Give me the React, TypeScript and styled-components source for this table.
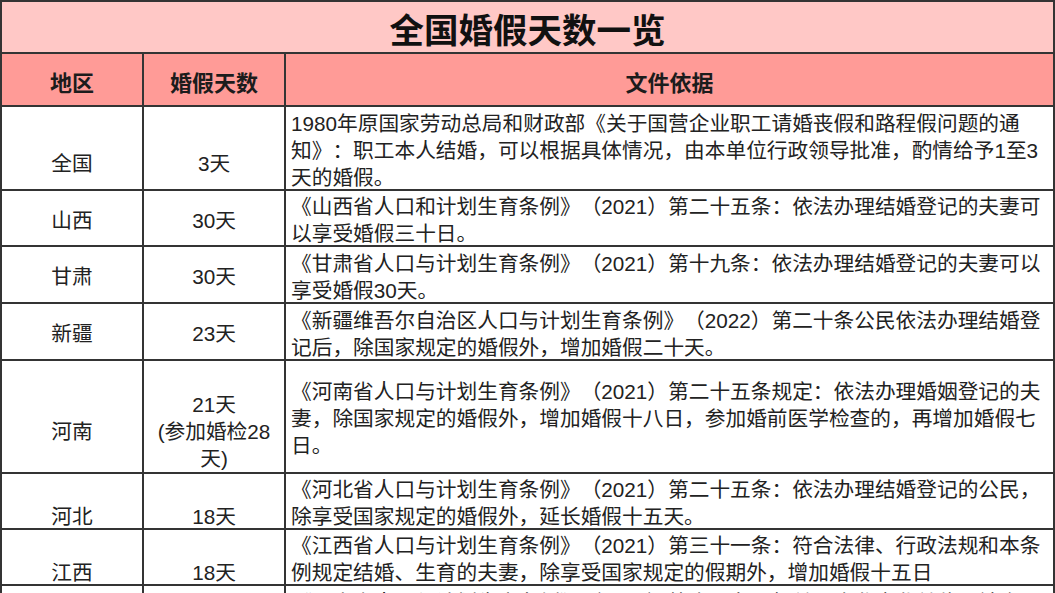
import React from "react";
import styled, { createGlobalStyle } from "styled-components";

const GlobalStyle = createGlobalStyle`
  html, body {
    margin: 0;
    padding: 0;
    overflow: hidden;
    background: #ffffff;
  }
  body {
    font-family: "Liberation Sans", "Noto Sans CJK SC", sans-serif;
    text-spacing-trim: space-all;
  }
`;

const Table = styled.div`
  display: flex;
  flex-direction: column;
  gap: 2px;
  padding: 2px;
  width: 1055px;
  box-sizing: border-box;
  background: #343434;
`;

const TitleBar = styled.div`
  height: 50px;
  display: flex;
  align-items: center;
  justify-content: center;
  background: #ffc8c6;
  font-family: "Noto Sans CJK SC", sans-serif;
  font-weight: 700;
  font-size: 34.5px;
  color: #111;
  padding-top: 2px;
  box-sizing: border-box;
`;

const Row = styled.div<{ $h: number }>`
  display: grid;
  grid-template-columns: 140px 140px 1fr;
  gap: 2px;
  height: ${(p) => p.$h}px;
`;

const HeadCell = styled.div`
  display: flex;
  align-items: center;
  justify-content: center;
  background: #ff9b97;
  font-family: "Noto Sans CJK SC", sans-serif;
  font-weight: 700;
  font-size: 22px;
  color: #1c1c1c;
  padding-top: 2px;
`;

const CenterCell = styled.div<{ $low?: boolean }>`
  display: flex;
  align-items: center;
  justify-content: center;
  text-align: center;
  background: #ffffff;
  font-size: 20.7px;
  line-height: 27px;
  color: #222;
  box-sizing: border-box;
  padding-top: ${(p) => (p.$low ? 30 : 4)}px;
  overflow: hidden;
  white-space: nowrap;
`;

const TextCell = styled.div`
  display: flex;
  align-items: center;
  background: #ffffff;
  font-size: 20.7px;
  line-height: 27px;
  color: #222;
  padding: 4px 0 0 5px;
  box-sizing: border-box;
  overflow: hidden;
  white-space: nowrap;
`;

type Item = {
  h: number;
  low?: boolean;
  region: string;
  days: string[];
  text: string[];
};

const rows: Item[] = [
  {
    h: 82,
    low: true,
    region: "全国",
    days: ["3天"],
    text: [
      "1980年原国家劳动总局和财政部《关于国营企业职工请婚丧假和路程假问题的通",
      "知》：职工本人结婚，可以根据具体情况，由本单位行政领导批准，酌情给予1至3",
      "天的婚假。",
    ],
  },
  {
    h: 54,
    region: "山西",
    days: ["30天"],
    text: [
      "《山西省人口和计划生育条例》（2021）第二十五条：依法办理结婚登记的夫妻可",
      "以享受婚假三十日。",
    ],
  },
  {
    h: 55,
    region: "甘肃",
    days: ["30天"],
    text: [
      "《甘肃省人口与计划生育条例》（2021）第十九条：依法办理结婚登记的夫妻可以",
      "享受婚假30天。",
    ],
  },
  {
    h: 55,
    region: "新疆",
    days: ["23天"],
    text: [
      "《新疆维吾尔自治区人口与计划生育条例》（2022）第二十条公民依法办理结婚登",
      "记后，除国家规定的婚假外，增加婚假二十天。",
    ],
  },
  {
    h: 111,
    low: true,
    region: "河南",
    days: ["21天", "(参加婚检28", "天)"],
    text: [
      "《河南省人口与计划生育条例》（2021）第二十五条规定：依法办理婚姻登记的夫",
      "妻，除国家规定的婚假外，增加婚假十八日，参加婚前医学检查的，再增加婚假七",
      "日。",
    ],
  },
  {
    h: 54,
    low: true,
    region: "河北",
    days: ["18天"],
    text: [
      "《河北省人口与计划生育条例》（2021）第二十五条：依法办理结婚登记的公民，",
      "除享受国家规定的婚假外，延长婚假十五天。",
    ],
  },
  {
    h: 54,
    low: true,
    region: "江西",
    days: ["18天"],
    text: [
      "《江西省人口与计划生育条例》（2021）第三十一条：符合法律、行政法规和本条",
      "例规定结婚、生育的夫妻，除享受国家规定的假期外，增加婚假十五日",
    ],
  },
  {
    h: 82,
    low: true,
    region: "云南",
    days: ["18天"],
    text: [
      "《云南省人口与计划生育条例》（2022）第十八条：机关、企业事业单位、社会",
      "团体和其他组织的职工依法办理结婚登记的，除享受国家规定的婚假外，",
      "增加婚假十五天。",
    ],
  },
];

const Lines: React.FC<{ lines: string[] }> = ({ lines }) => (
  <div>
    {lines.map((l, i) => (
      <React.Fragment key={i}>
        {i > 0 && <br />}
        {l}
      </React.Fragment>
    ))}
  </div>
);

export default function App() {
  return (
    <>
      <GlobalStyle />
      <Table>
        <TitleBar>全国婚假天数一览</TitleBar>
        <Row $h={51}>
          <HeadCell>地区</HeadCell>
          <HeadCell>婚假天数</HeadCell>
          <HeadCell>文件依据</HeadCell>
        </Row>
        {rows.map((r) => (
          <Row key={r.region} $h={r.h}>
            <CenterCell $low={r.low}>{r.region}</CenterCell>
            <CenterCell $low={r.low}>
              <Lines lines={r.days} />
            </CenterCell>
            <TextCell>
              <Lines lines={r.text} />
            </TextCell>
          </Row>
        ))}
      </Table>
    </>
  );
}
